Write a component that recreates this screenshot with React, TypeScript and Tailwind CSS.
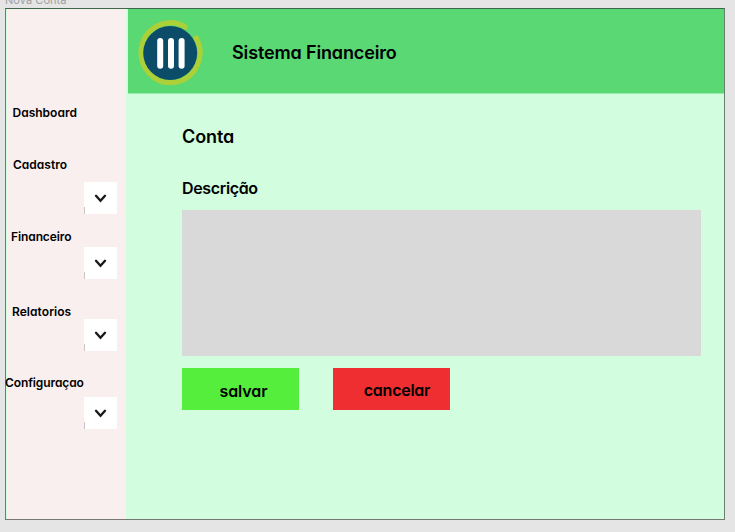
const rounded = "font-[Inter,'Noto_Sans',sans-serif] [font-feature-settings:'cv11'] font-semibold text-black whitespace-nowrap";

function NavLabel({ text, className }: { text: string; className: string }) {
  return (
    <div className={`${rounded} h-4 text-[12px] leading-4 ${className}`}>
      <span>{text}</span>
    </div>
  );
}

function ChevronBox({ className }: { className: string }) {
  return (
    <button className={`ml-[77px] block w-[33px] shrink-0 bg-white ${className}`}>
      <svg viewBox="0 0 33 32" className="block h-8 w-[33px]" fill="none">
        <path d="M12 13.8 L16.5 18.8 L21 13.8" stroke="#1b1b1b" strokeWidth="2.4" strokeLinecap="round" strokeLinejoin="miter" />
        <path d="M0.5 25 V32" stroke="#c9c5c5" strokeWidth="1" />
      </svg>
    </button>
  );
}

function Logo() {
  return (
    <svg viewBox="0 0 66 68" className="mt-[3px] h-[68px] w-[66px]" fill="none">
      <path d="M48.6 8 A29.4 29.9 0 1 0 59.3 19.3" stroke="#abd038" strokeWidth="5.2" />
      <circle cx="48.2" cy="8.4" r="2.4" fill="#abd038" />
      <circle cx="59.2" cy="19.3" r="2.7" fill="#abd038" />
      <circle cx="33.2" cy="34" r="27" fill="#0b4d68" />
      <g stroke="white" strokeWidth="6" strokeLinecap="round">
        <path d="M23.2 22 V46.8" />
        <path d="M34 22 V46.8" />
        <path d="M44.6 22 V46.8" />
      </g>
    </svg>
  );
}

export default function App() {
  return (
    <div className="flex h-[532px] w-[735px] flex-col overflow-hidden bg-[#e5e5e5]">
      <div className="flex h-2 shrink-0 items-end pl-[5px]">
        <div className="h-[15px] shrink-0 font-[Inter,sans-serif] text-[11px] leading-[15px] tracking-[0.05px] text-[#a0a0a0]">Nova Conta</div>
      </div>
      <div className="ml-[5px] flex h-[512px] w-[720px] shrink-0 border border-[#68816e] border-t-[#3e6649] border-b-[#777774] bg-[#d2fddf]">
        <nav className="ml-px flex w-[119px] shrink-0 flex-col bg-[#f9efee]">
          <NavLabel text="Dashboard" className="mt-24 ml-[5.5px]" />
          <NavLabel text="Cadastro" className="mt-9 ml-1.5" />
          <ChevronBox className="mt-[9px]" />
          <NavLabel text="Financeiro" className="mt-[15px] ml-1 tracking-[-0.1px]" />
          <ChevronBox className="mt-[2px]" />
          <NavLabel text="Relatorios" className="mt-[25px] ml-[5px] tracking-[0.05px]" />
          <ChevronBox className="-mt-px" />
          <NavLabel text="Configuraçao" className="mt-6 -ml-0.5 tracking-[-0.1px]" />
          <ChevronBox className="mt-[6px]" />
        </nav>
        <div className="ml-0.5 flex-1">
          <header className="flex h-[85px] items-center border-b border-[#9aedac] bg-[#5ad873] pl-[9px]">
            <Logo />
            <h1 className={`${rounded} ml-[29px] pt-1 text-[18px] leading-6 tracking-[-0.14px]`}>Sistema Financeiro</h1>
          </header>
          <main className="pl-[54px]">
            <h2 className={`${rounded} mt-[31px] text-[18px] leading-6 tracking-[-0.1px]`}>Conta</h2>
            <label className={`${rounded} mt-[27px] block text-[16px] leading-6 tracking-[-0.35px]`}>Descrição</label>
            <div className="mt-[10px] h-[146px] w-[519px] bg-[#d9d9d9]" />
            <div className="mt-3 flex gap-[34px]">
              <button className={`${rounded} h-[42px] w-[117px] bg-[#55ee3c] pt-1 pl-1.5 text-[16px] leading-6 tracking-[-0.1px]`}>salvar</button>
              <button className={`${rounded} h-[42px] w-[117px] bg-[#ef2e31] pt-0.5 pl-[11px] text-[16px] leading-6 tracking-[-0.25px]`}>cancelar</button>
            </div>
          </main>
        </div>
      </div>
    </div>
  );
}
